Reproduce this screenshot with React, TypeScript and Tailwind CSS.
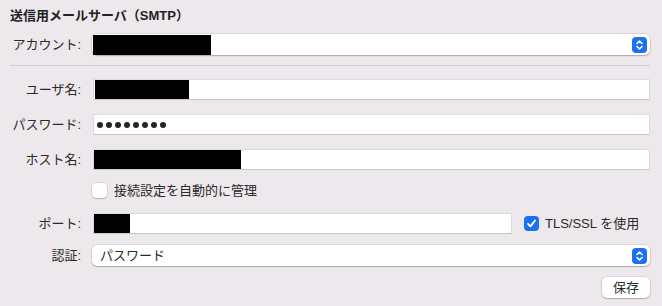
import React from "react";

const font = { fontFamily: '"Liberation Sans", "Noto Sans CJK JP", sans-serif' };

function Stepper() {
  return (
    <div className="w-[15px] h-[16px] rounded-[4px] bg-[#1c71f2] flex items-center justify-center">
      <svg width="9" height="12" viewBox="0 0 9 12" fill="none">
        <path d="M2 4.5 L4.5 2 L7 4.5" stroke="white" strokeWidth="1.6" strokeLinecap="round" strokeLinejoin="round" />
        <path d="M2 7.5 L4.5 10 L7 7.5" stroke="white" strokeWidth="1.6" strokeLinecap="round" strokeLinejoin="round" />
      </svg>
    </div>
  );
}

function Label({ children }: { children: React.ReactNode }) {
  return (
    <div className="w-[71px] shrink-0 text-right text-[13px] leading-[16px] text-[#2a2a2a] whitespace-nowrap">
      {children}
    </div>
  );
}

function TextField({ children, className = "" }: { children?: React.ReactNode; className?: string }) {
  return (
    <div
      className={
        "h-[21px] bg-white border border-[#dedade] border-b-[#c9c5c9] flex items-stretch overflow-hidden " +
        className
      }
    >
      {children}
    </div>
  );
}

function Popup({ children, className = "" }: { children?: React.ReactNode; className?: string }) {
  return (
    <div
      className={
        "h-[21px] bg-white rounded-[5px] shadow-[0_0_0_0.5px_rgba(0,0,0,0.14),0_1px_1.5px_rgba(0,0,0,0.22)] flex items-center pr-[3px] " +
        className
      }
    >
      <div className="flex-1 h-full flex items-center overflow-hidden">{children}</div>
      <Stepper />
    </div>
  );
}

export default function App() {
  return (
    <div
      className="w-[662px] h-[306px] bg-[#ece8ec] pl-[10px] pr-[12px] pt-[8px] flex flex-col overflow-hidden"
      style={font}
    >
      <div className="h-[16px] leading-[16px] text-[13px] font-bold text-[#222]">送信用メールサーバ（SMTP）</div>

      <div className="mt-[10px] flex items-center h-[21px]">
        <Label>アカウント:</Label>
        <Popup className="ml-[11px] flex-1">
          <div className="ml-[1px] w-[118px] h-[20px] bg-black" />
        </Popup>
      </div>

      <div className="mt-[10px] h-px bg-[#d3cfd3]" />

      <div className="mt-[13px] flex items-center h-[21px]">
        <Label>ユーザ名:</Label>
        <TextField className="ml-[12px] flex-1">
          <div className="ml-[1px] w-[94px] bg-black" />
        </TextField>
      </div>

      <div className="mt-[14px] flex items-center h-[21px]">
        <Label>パスワード:</Label>
        <TextField className="ml-[12px] flex-1">
          <div className="flex items-center gap-[3px] pl-[3px]">
            {[0, 1, 2, 3, 4, 5, 6, 7].map((i) => (
              <div key={i} className="w-[6px] h-[6px] rounded-full bg-[#262626]" />
            ))}
          </div>
        </TextField>
      </div>

      <div className="mt-[14px] flex items-center h-[21px]">
        <Label>ホスト名:</Label>
        <TextField className="ml-[12px] flex-1">
          <div className="w-[147px] bg-black" />
        </TextField>
      </div>

      <div className="mt-[13px] flex items-center h-[15px] pl-[82px]">
        <div className="w-[15px] h-[15px] bg-white rounded-[4px] shadow-[0_0_0_0.5px_rgba(0,0,0,0.18),0_1px_1px_rgba(0,0,0,0.15)]" />
        <div className="ml-[7px] text-[13px] leading-[16px] text-[#2a2a2a]">接続設定を自動的に管理</div>
      </div>

      <div className="mt-[15px] flex items-center h-[21px]">
        <Label>ポート:</Label>
        <TextField className="ml-[12px] w-[419px]">
          <div className="w-[36px] bg-black" />
        </TextField>
        <div className="ml-[12px] w-[15px] h-[15px] rounded-[4px] bg-[#1c71f2] flex items-center justify-center">
          <svg width="11" height="11" viewBox="0 0 11 11" fill="none">
            <path d="M2 5.8 L4.5 8.3 L9 2.5" stroke="white" strokeWidth="1.9" strokeLinecap="round" strokeLinejoin="round" />
          </svg>
        </div>
        <div className="ml-[6px] text-[13px] leading-[16px] text-[#2a2a2a] whitespace-nowrap">TLS/SSL を使用</div>
      </div>

      <div className="mt-[11px] flex items-center h-[21px]">
        <Label>認証:</Label>
        <Popup className="ml-[11px] flex-1">
          <span className="pl-[8px] text-[13px] leading-[16px] text-[#2a2a2a]">パスワード</span>
        </Popup>
      </div>

      <div className="mt-[11px] flex justify-end">
        <div className="w-[48px] h-[21px] bg-white rounded-[5px] shadow-[0_0_0_0.5px_rgba(0,0,0,0.14),0_1px_1.5px_rgba(0,0,0,0.22)] flex items-center justify-center text-[13px] leading-[16px] text-[#2a2a2a]">
          保存
        </div>
      </div>
    </div>
  );
}
